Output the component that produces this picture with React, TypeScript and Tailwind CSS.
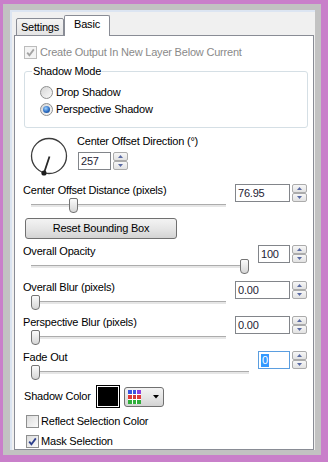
import type { ReactNode } from 'react'

// Win7-style dialog: tab strip, one tab page with sliders and spin boxes.

function CheckBox({ checked, disabled }: { checked?: boolean; disabled?: boolean }) {
  return (
    <div
      className={`flex h-[13px] w-[13px] shrink-0 items-center justify-center border ${
        disabled ? 'border-[#bcbcbc] bg-[#f4f4f4]' : 'border-[#8e8f8f] bg-linear-to-br from-[#dcdcdc] to-[#fbfbfb]'
      }`}
    >
      {checked && (
        <svg width="11" height="11" viewBox="0 0 11 11">
          <path
            d="M2.2 5.6 L4.4 8.2 L8.8 2.4"
            fill="none"
            stroke={disabled ? '#a3a3a3' : '#2c3f8c'}
            strokeWidth="1.8"
          />
        </svg>
      )}
    </div>
  )
}

function Radio({ checked }: { checked?: boolean }) {
  return (
    <div className="flex h-[13px] w-[13px] shrink-0 items-center justify-center rounded-full border border-[#8e8f8f] bg-linear-to-br from-[#d6d6d6] to-[#fafafa]">
      {checked && (
        <div className="h-[7px] w-[7px] rounded-full bg-[radial-gradient(circle_at_40%_35%,#9fd3ff,#2b6cc2_55%,#153f7a)]" />
      )}
    </div>
  )
}

function Arrow({ down }: { down?: boolean }) {
  return (
    <svg width="5" height="3" viewBox="0 0 5 3">
      <path d={down ? 'M0 0 L5 0 L2.5 3Z' : 'M0 3 L5 3 L2.5 0Z'} fill="#5a6aa3" />
    </svg>
  )
}

function Spinner() {
  return (
    <div className="flex h-[18px] w-[15px] shrink-0 flex-col">
      <div className="flex h-[9px] items-center justify-center rounded-[2px] border border-[#ababab] bg-linear-to-b from-[#f7f7f7] to-[#e2e2e2]">
        <Arrow />
      </div>
      <div className="flex h-[9px] items-center justify-center rounded-[2px] border border-[#ababab] bg-linear-to-b from-[#f7f7f7] to-[#e2e2e2]">
        <Arrow down />
      </div>
    </div>
  )
}

function NumBox({ value, width, focused }: { value: string; width: string; focused?: boolean }) {
  return (
    <div className="flex items-start gap-[2px]">
      <div
        className={`flex h-[18px] items-center bg-white pl-[2px] text-[#1e2233] ${width} border ${
          focused ? 'border-[#5b9ee0]' : 'border-[#82858a]'
        }`}
      >
        {focused ? <span className="bg-[#3399ff] px-px leading-[13px] text-white">{value}</span> : value}
      </div>
      <Spinner />
    </div>
  )
}

function Thumb({ x }: { x: number }) {
  return (
    <div
      className="absolute top-0 h-[15px] w-[9px] rounded-t-[2px] rounded-b-[4px] border border-[#747474] bg-linear-to-b from-[#fbfbfb] to-[#d6d6d6]"
      style={{ left: x }}
    />
  )
}

function SliderRow({
  label,
  value,
  thumb,
  narrow,
  focused,
  className
}: {
  label: string
  value: string
  thumb: number
  narrow?: boolean
  focused?: boolean
  className?: string
}) {
  return (
    <div className={`flex pr-[6px] pl-[8px] ${className ?? ''}`}>
      <div className="flex-1">
        <div className="h-[13px] leading-[13px]">{label}</div>
        <div className="relative mt-px h-[16px]">
          <div className="absolute top-[6px] right-0 left-[8px] h-[3px] border-t border-[#acacac] bg-[#e6e6e6]" />
          <Thumb x={thumb} />
        </div>
      </div>
      <div className="ml-[9px]">
        <NumBox value={value} width={narrow ? 'w-[32px]' : 'w-[55px]'} focused={focused} />
      </div>
    </div>
  )
}

function Button({ children, className }: { children: ReactNode; className?: string }) {
  return (
    <div
      className={`flex items-center justify-center rounded-[3px] border border-[#707070] bg-linear-to-b from-[#f3f3f3] via-[#e6e6e6] to-[#d3d3d3] ${className ?? ''}`}
    >
      {children}
    </div>
  )
}

function Dial() {
  return (
    <svg width="40" height="40" viewBox="0 0 40 40" className="ml-[14px] mt-px shrink-0">
      <circle cx="20" cy="20" r="17.5" fill="none" stroke="#3c3c3c" strokeWidth="1.3" />
      <line x1="20.5" y1="20.5" x2="15" y2="37" stroke="#2a2a2a" strokeWidth="1.8" />
      <circle cx="15" cy="37" r="2.6" fill="#1e1e1e" />
    </svg>
  )
}

const GRID = ['#3a55e0', '#3a55e0', '#8a3fe0', '#e03a3a', '#d03a3a', '#e03a3a', '#2fae3a', '#2fae3a', '#2fae3a']

export default function App() {
  return (
    <div className="h-[462px] w-[328px] bg-[#c97fca] pt-[4px] pl-[3px] font-['Liberation_Sans',Arial,sans-serif] text-[11px] tracking-[-0.2px] text-black">
      <div className="h-[451px] w-[318px] bg-[#c2c2c2] pt-[6px] pl-[7px]">
        <div className="h-[440px] w-[305px] border-t-2 border-l-2 border-[#dce5f2] bg-[#f0f0f0] pt-[3px] pl-[2px]">
          {/* tab strip */}
          <div className="flex h-[21px] items-end">
            <div className="ml-[2px] flex h-[18px] w-[48px] items-start justify-center rounded-t-[2px] border border-[#898c95] bg-linear-to-b from-[#f4f4f4] to-[#e4e4e4] pt-[2px] leading-[13px]">
              Settings
            </div>
            <div className="relative z-10 flex h-[21px] w-[46px] items-start justify-center rounded-t-[2px] border border-b-0 border-[#898c95] bg-white pt-[2px] leading-[13px]">
              Basic
            </div>
          </div>

          {/* tab page */}
          <div className="-mt-px h-[415px] w-[300px] border border-[#898c95] bg-white">
            <div className="mt-[9px] ml-[9px] flex h-[14px] items-center gap-[3px] text-[#8a8a8a]">
              <CheckBox checked disabled />
              <span>Create Output In New Layer Below Current</span>
            </div>

            <fieldset className="mt-[6px] ml-[9px] w-[284px] rounded-[3px] border border-[#d5dfe5] pb-[11px] pl-[7px]">
              <legend className="px-px leading-[13px]">Shadow Mode</legend>
              <div className="mt-[7px] ml-[8px] flex h-[14px] items-center gap-[3px]">
                <Radio />
                <span>Drop Shadow</span>
              </div>
              <div className="mt-[3px] ml-[8px] flex h-[14px] items-center gap-[3px]">
                <Radio checked />
                <span>Perspective Shadow</span>
              </div>
            </fieldset>

            <div className="mt-[7px] flex">
              <Dial />
              <div className="ml-[8px]">
                <div className="h-[13px] leading-[13px]">Center Offset Direction (°)</div>
                <div className="mt-[4px] ml-px">
                  <NumBox value="257" width="w-[33px]" />
                </div>
              </div>
            </div>

            <SliderRow className="mt-[8px]" label="Center Offset Distance (pixels)" value="76.95" thumb={46} />

            <Button className="mt-[4px] ml-[10px] h-[21px] w-[152px]">Reset Bounding Box</Button>

            <SliderRow className="mt-[6px]" label="Overall Opacity" value="100" thumb={217} narrow />
            <SliderRow className="mt-[6px]" label="Overall Blur (pixels)" value="0.00" thumb={8} />
            <SliderRow className="mt-[5px]" label="Perspective Blur (pixels)" value="0.00" thumb={8} />
            <SliderRow className="mt-[5px]" label="Fade Out" value="0" thumb={8} narrow focused />

            <div className="mt-[4px] ml-[9px] flex h-[23px] items-center">
              <span className="w-[72px]">Shadow Color</span>
              <div className="h-[23px] w-[24px] border border-black bg-white p-px">
                <div className="h-full w-full bg-black" />
              </div>
              <Button className="ml-[4px] h-[20px] w-[40px] justify-start! pl-[3px]">
                <div className="grid h-[14px] w-[13px] grid-cols-3 grid-rows-3 gap-px bg-white">
                  {GRID.map((c, i) => (
                    <div key={i} style={{ background: c }} />
                  ))}
                </div>
                <svg width="6" height="4" viewBox="0 0 6 4" className="ml-[12px]">
                  <path d="M0 0 L6 0 L3 3.5Z" fill="#000" />
                </svg>
              </Button>
            </div>

            <div className="mt-[7px] ml-[11px] flex h-[13px] items-center gap-[2px]">
              <CheckBox />
              <span>Reflect Selection Color</span>
            </div>
            <div className="mt-[7px] ml-[11px] flex h-[13px] items-center gap-[2px]">
              <CheckBox checked />
              <span>Mask Selection</span>
            </div>
          </div>
        </div>
      </div>
    </div>
  )
}
